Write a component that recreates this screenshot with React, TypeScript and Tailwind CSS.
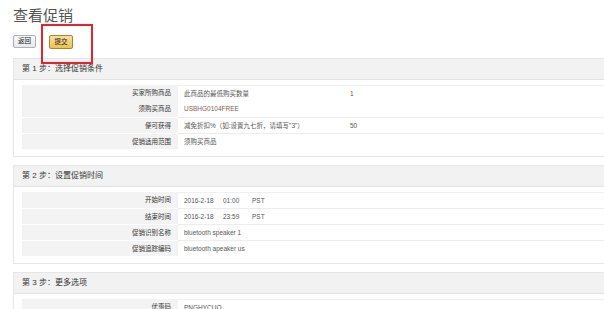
import React from 'react';

type Row = { label: string; value: React.ReactNode; extra?: string; noLine?: boolean };

const step1: Row[] = [
  { label: '买家所购商品', value: '此商品的最低购买数量', extra: '1' },
  { label: '须购买商品', value: <span className="text-[#8a5b55]">USBHG0104FREE</span>, noLine: true },
  { label: '便可获得', value: '减免折扣%（如:设置九七折，请填写"3"）', extra: '50' },
  { label: '促销适用范围', value: '须购买商品' },
];

const step2: Row[] = [
  { label: '开始时间', value: <TimeValue date="2016-2-18" time="01:00" /> },
  { label: '结束时间', value: <TimeValue date="2016-2-18" time="23:59" /> },
  { label: '促销识别名称', value: 'bluetooth speaker 1' },
  { label: '促销追踪编码', value: 'bluetooth apeaker us' },
];

const step3: Row[] = [
  { label: '优惠码', value: 'PNGHYCUO' },
  { label: '', value: '' },
];

function TimeValue({ date, time }: { date: string; time: string }) {
  return (
    <span className="flex">
      <span className="w-[39px]">{date}</span>
      <span className="w-[29px]">{time}</span>
      <span>PST</span>
    </span>
  );
}

function Panel({ title, rows, last }: { title: string; rows: Row[]; last?: boolean }) {
  return (
    <section className={`w-[620px] border border-[#e6e6e6] bg-white ${last ? '' : 'pb-[7px]'}`}>
      <div className="h-[21px] flex items-center pl-[8px] bg-[#f2f2f2] border-b border-[#e2e2e2] text-[8px] text-[#333]">
        {title}
      </div>
      <div className="pt-[5px] pl-[8px]">
        {rows.map((r, i) => (
          <div key={i} className="flex h-[16px] text-[6.5px]">
            <div
              className={`w-[156px] shrink-0 bg-[#f3f3f3] pr-[7px] flex items-center justify-end text-[#333] ${
                i > 0 && !r.noLine ? 'border-t border-white' : ''
              }`}
            >
              {r.label}
            </div>
            <div
              className={`flex-1 flex items-center text-[#555] ${
                i === 0 ? 'border-t border-[#f0f0f0]' : r.noLine ? '' : 'border-t border-[#ededed]'
              }`}
            >
              <div className="w-[166px] pl-[6px]">{r.value}</div>
              <div className="pl-[6px]">{r.extra}</div>
            </div>
          </div>
        ))}
      </div>
    </section>
  );
}

export default function App() {
  return (
    <div
      className="relative w-[604px] h-[309px] overflow-hidden bg-white"
      style={{ fontFamily: '"Liberation Sans", "Noto Sans CJK SC", sans-serif' }}
    >
      <div className="pl-[13px]">
        <h1 className="pt-[8px] text-[15px] leading-[16px] text-[#555] font-normal">查看促销</h1>

        <div className="mt-[11px] flex gap-[13px]">
          <button className="h-[13px] w-[23px] rounded-[2px] border border-[#adb1b8] bg-gradient-to-b from-[#f7f8fa] to-[#e7e9ec] text-[6.5px] text-[#111] leading-none">
            返回
          </button>
          <button className="h-[14px] w-[24px] rounded-[2px] border border-[#a88734] bg-gradient-to-b from-[#f7dfa5] to-[#f0c14b] text-[6.5px] text-[#111] leading-none">
            提交
          </button>
        </div>

        <div className="mt-[9px] flex flex-col gap-[8px]">
          <Panel title="第 1 步：选择促销条件" rows={step1} />
          <Panel title="第 2 步：设置促销时间" rows={step2} />
          <Panel title="第 3 步：更多选项" rows={step3} last />
        </div>
      </div>

      {/* 标注框 */}
      <div className="absolute left-[41px] top-[24px] w-[52px] h-[40px] border-2 border-[#e8222c]" />
    </div>
  );
}
